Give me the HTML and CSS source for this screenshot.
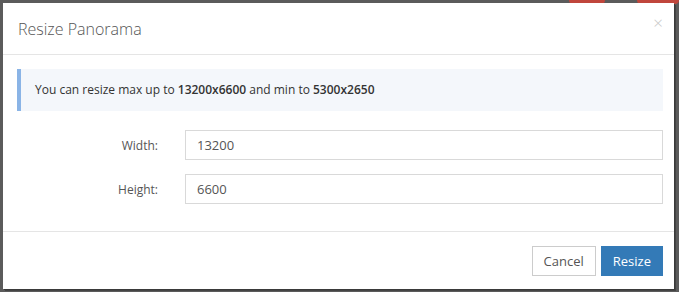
FILE: index.html
```html
<!DOCTYPE html>
<html lang="en">
<head>
  <meta charset="UTF-8" />
  <title>Resize Panorama</title>
  <link rel="stylesheet" href="styles.css">
</head>
<body>
  <div class="backdrop">
    <div class="bg-spot spot-a"></div>
    <div class="bg-spot spot-b"></div>

    <!-- Modal -->
    <div class="modal">
      <div class="modal-header">
        <h4>Resize Panorama</h4>
        <span class="close">&times;</span>
      </div>

      <div class="modal-body">
        <div class="alert">
          You can resize max up to <b>13200x6600</b> and min to <b>5300x2650</b>
        </div>

        <form class="size-form">
          <label for="width">Width:</label>
          <input type="text" id="width" value="13200" />

          <label for="height">Height:</label>
          <input type="text" id="height" value="6600" />
        </form>
      </div>

      <div class="modal-footer">
        <button class="btn">Cancel</button>
        <button class="btn btn-primary">Resize</button>
      </div>
    </div>
  </div>
</body>
</html>
```

FILE: styles.css
```css
/* Base */
* {
  margin: 0;
  padding: 0;
  box-sizing: border-box;
  font-family: "Open Sans", Arial, sans-serif;
}

body {
  background-color: #5b5b5b;
  width: 679px;
  height: 292px;
  overflow: hidden;
}

.backdrop {
  position: relative;
  height: 292px;
  padding: 3px 0 0 3px;
  background-color: #5b5b5b;
}

.bg-spot {
  position: absolute;
  top: 0;
  height: 4px;
  background-color: #c0463c;
  border-radius: 0 0 8px 8px;
}

.spot-a { left: 569px; width: 36px; }
.spot-b { left: 637px; width: 42px; }

/* Modal box */
.modal {
  position: relative;
  width: 671px;
  height: 286px;
  background: white;
  box-shadow: 1px 1px 0 #3a3a3a, 2px 2px 0 #444;
}

.modal-header {
  height: 52px;
  padding: 0 15px;
  display: flex;
  align-items: center;
  justify-content: space-between;
  border-bottom: 1px solid #e5e5e5;
}

.modal-header h4 {
  font-size: 16px;
  font-weight: 300;
  color: #555;
  margin-top: 1px;
}

.close {
  color: #c8c8c8;
  font-size: 17px;
  font-weight: 300;
  margin-top: -13px;
  margin-right: -4px;
}

.modal-body {
  height: 176px;
  padding: 14px 11px 0 14px;
}

.alert {
  height: 42px;
  padding: 0 14px;
  line-height: 42px;
  background-color: #f4f7fb;
  border-left: 4px solid #8ab4e6;
  font-size: 12px;
  color: #333;
}

.alert b {
  font-weight: 600;
}

/* Form */
.size-form {
  display: grid;
  grid-template-columns: 141px 1fr;
  column-gap: 27px;
  row-gap: 14px;
  margin-top: 19px;
  align-items: center;
}

.size-form label {
  text-align: right;
  font-size: 12px;
  color: #555;
}

.size-form input {
  height: 30px;
  padding: 0 11px;
  border: 1px solid #d9d9d9;
  font-size: 13px;
  color: #555;
  outline: none;
}

/* Footer */
.modal-footer {
  border-top: 1px solid #e5e5e5;
  padding: 14px 11px 0 0;
  display: flex;
  justify-content: flex-end;
  gap: 5px;
}

.btn {
  height: 30px;
  padding: 0 11px;
  font-size: 13px;
  color: #555;
  background: white;
  border: 1px solid #ccc;
}

.btn-primary {
  background-color: #337ab7;
  border-color: #337ab7;
  color: white;
}
```
